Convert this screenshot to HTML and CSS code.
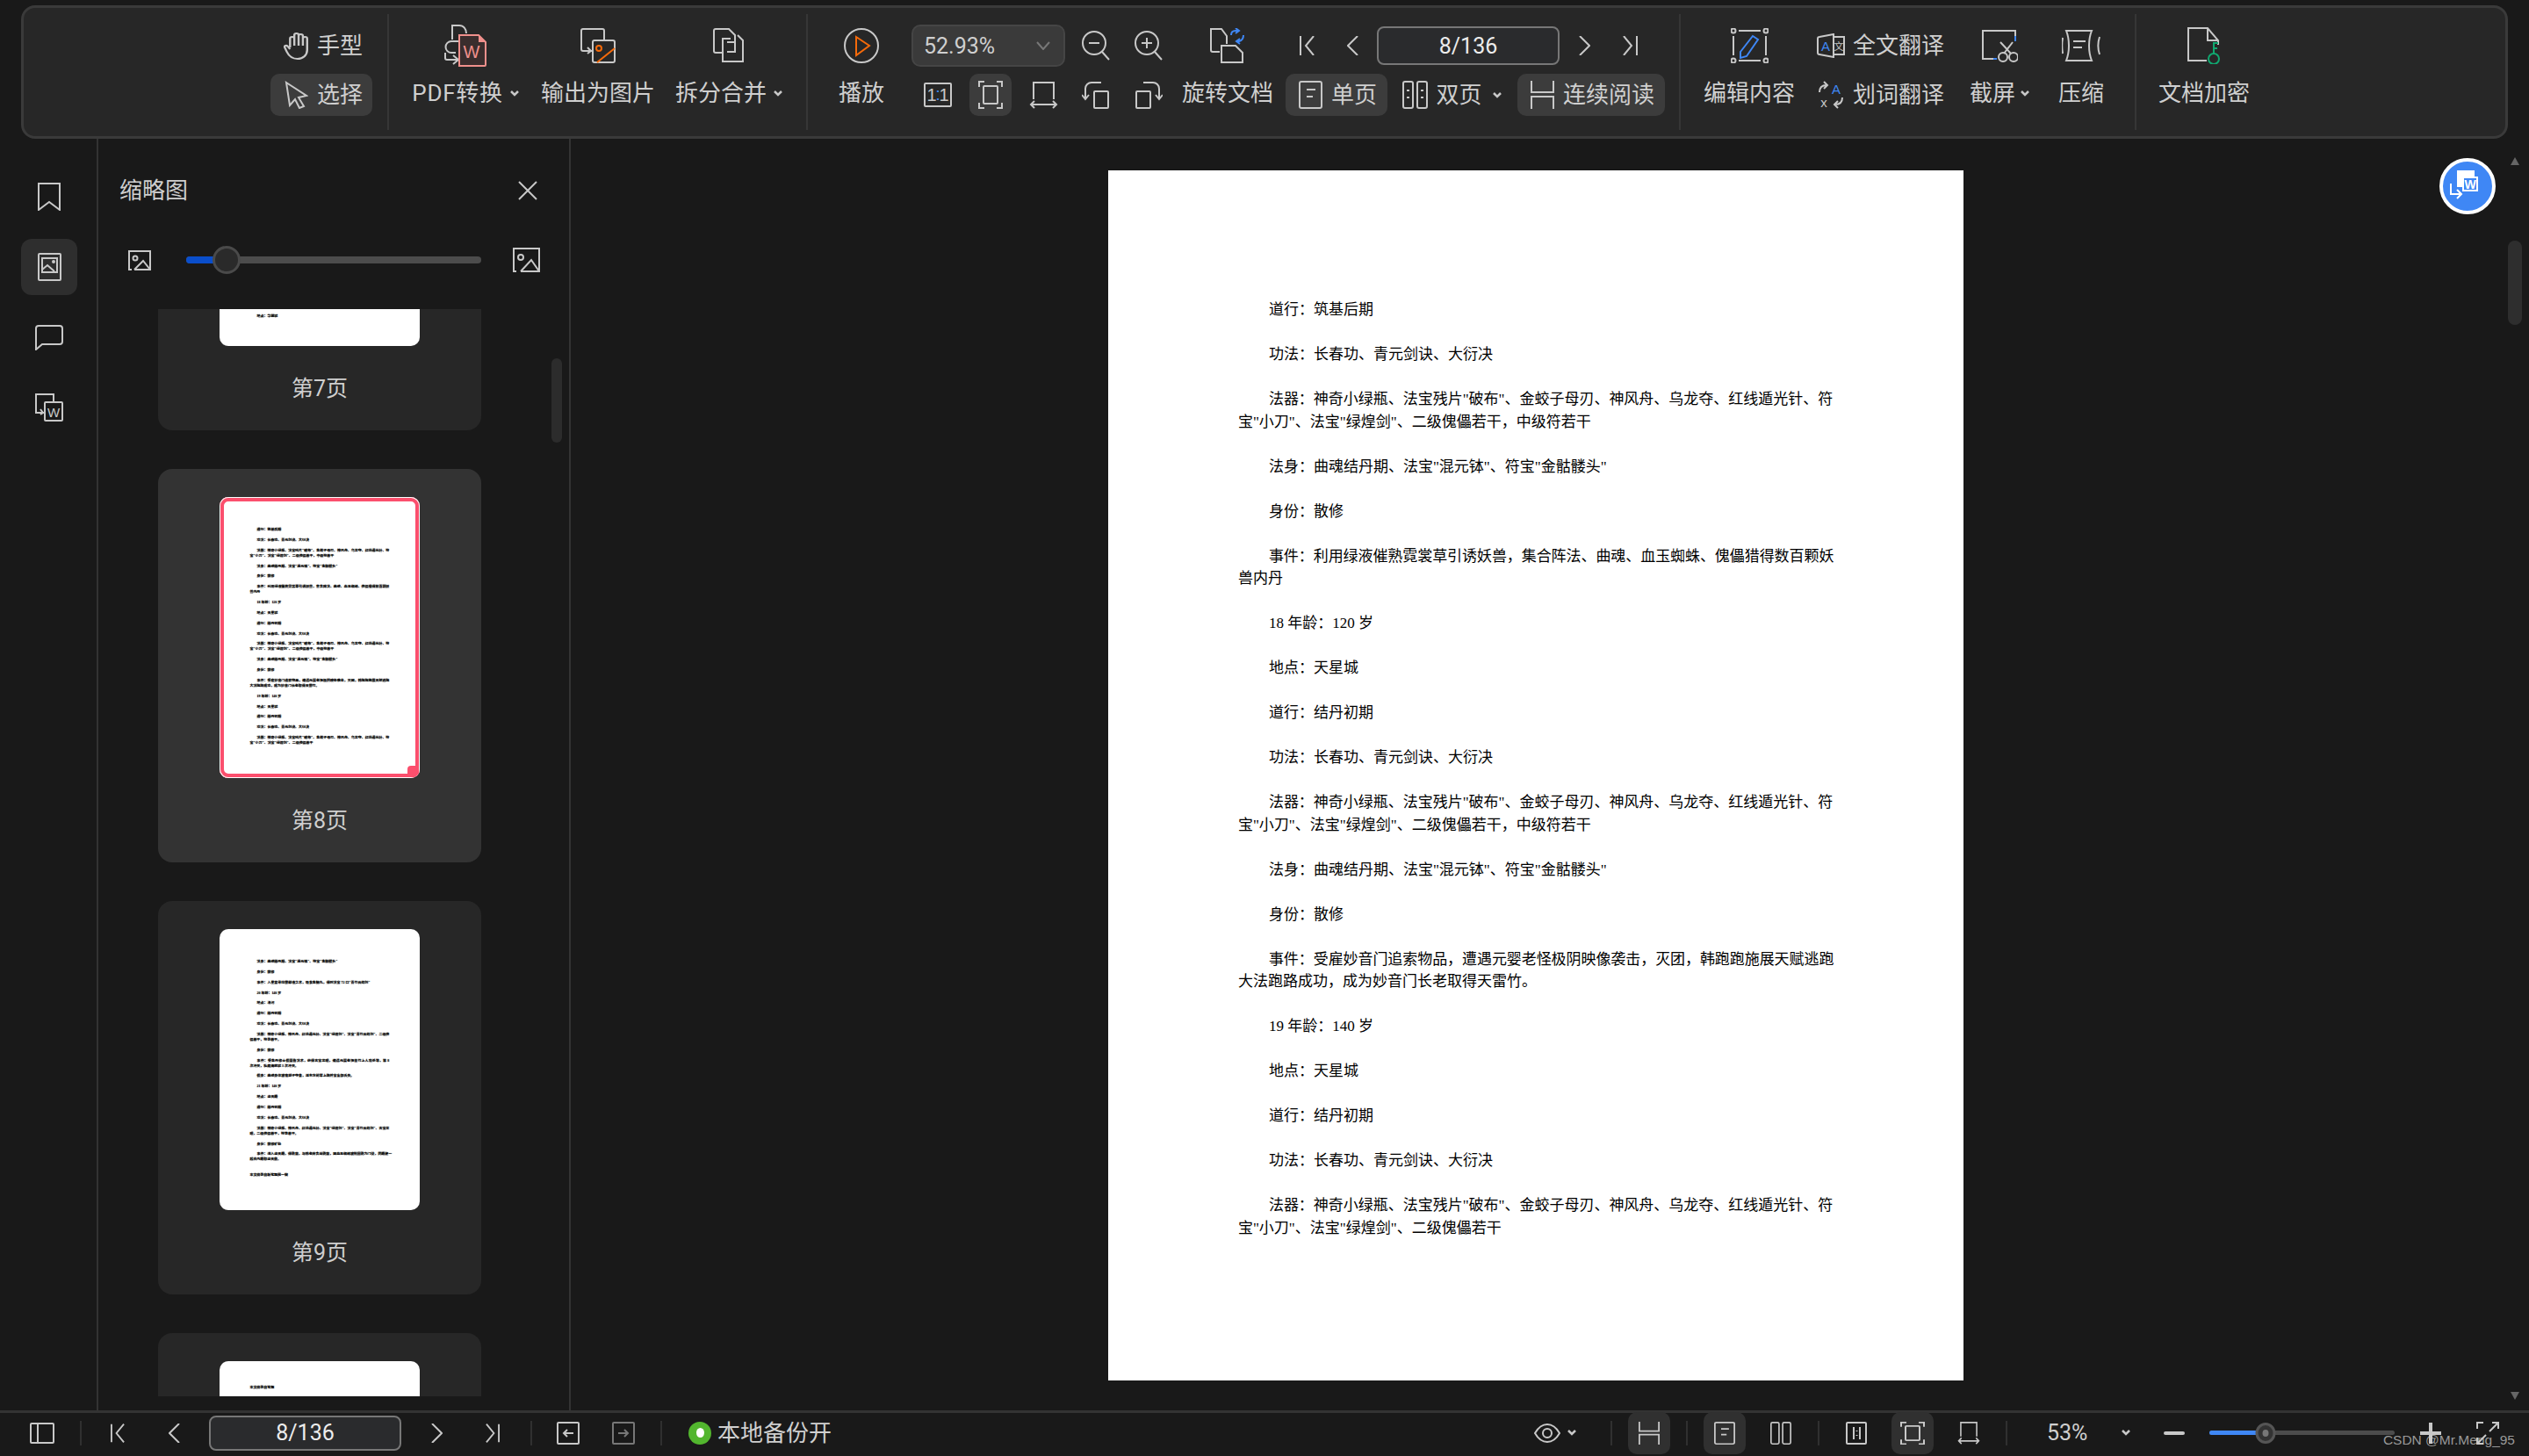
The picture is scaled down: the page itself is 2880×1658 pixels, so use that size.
FILE: index.html
```html
<!DOCTYPE html>
<html lang="zh-CN">
<head>
	<meta charset="UTF-8">
	<title>PDF阅读器</title>
	<link rel="stylesheet" href="styles.css">
</head>
<body>
<svg class="sprite" width="0" height="0">
	<defs>
		<g id="first"><path d="M1 0v22M16 0L7 11l9 11"/></g>
		<g id="prev"><path d="M12 0L1 11l11 11"/></g>
		<g id="next"><path d="M1 0l11 11L1 22"/></g>
		<g id="last"><path d="M16 0v22M1 0l9 11L1 22"/></g>
		<g id="single"><rect x="1" y="1" width="25" height="30" rx="2"/><path d="M9 10h10M9 18h7"/></g>
		<g id="double"><rect x="1" y="1" width="11" height="30" rx="2"/><rect x="17" y="1" width="11" height="30" rx="2"/><path d="M5 11h3M5 19h3M21 11h3M21 19h3"/></g>
		<g id="cont"><path d="M1 0v13h25V0M1 32V18h25v14"/></g>
		<g id="fit"><path d="M1 7V1h6M21 1h6v6M27 25v6h-6M7 31H1v-6"/><rect x="6" y="6" width="16" height="20" rx="1"/></g>
		<g id="fitw"><path d="M5 20V1h23v19M2 26h29M6 22l-4 4 4 4M27 22l4 4-4 4"/></g>
		<g id="chev"><path d="M1 1l4 4 4-4"/></g>
	</defs>
</svg>

<div class="app">
	<header class="top">
		<div class="toolbar">
			<section class="sec sec-mode">
				<div class="stack">
					<div class="row pill-row plain">
						<svg class="ic" width="28" height="32" viewBox="0 0 23 32" preserveAspectRatio="none"><path d="M6 18V8a2 2 0 0 1 4 0V4a2 2 0 0 1 4 0v1a2 2 0 0 1 4 0v3a2 2 0 0 1 4 0v13c0 6-4 10-9 10s-8-3-10-8l-2-5c-1-2 2-3 3-1l2 3M10 8v8M14 5v11M18 6v10"/></svg>
						<span>手型</span>
					</div>
					<div class="row pill-row on">
						<svg class="ic" width="28" height="32" viewBox="0 0 28 32"><path d="M3 2l23 15-9 2 6 10-5 2-5-10-6 7z"/></svg>
						<span>选择</span>
					</div>
				</div>
			</section>

			<section class="sec sec-convert">
				<div class="tool w-pdf">
					<div class="tool-icon">
						<svg class="ic" width="48" height="48" viewBox="0 0 48 48"><path d="M9 17V1h8c5 0 8 4 8 9M16 19H8a6 6 0 0 0 0 13h5M1 32v6a2 2 0 0 0 2 2h12M10 35l6 5-6 5"/><path class="pink" d="M17 12h22l8 8v26a1 1 0 0 1-1 1H17z"/><path class="pink-solid" d="M39 12l8 8h-8z"/><text class="pink-text" x="31" y="38" text-anchor="middle">W</text></svg>
					</div>
					<div class="tool-label">PDF转换<svg class="ic chev" width="10" height="7" viewBox="0 0 10 7"><use href="#chev"/></svg></div>
				</div>
				<div class="tool w5">
					<div class="tool-icon">
						<svg class="ic" width="40" height="40" viewBox="0 0 40 40"><path d="M14 26H3a2 2 0 0 1-2-2V3a2 2 0 0 1 2-2h22a2 2 0 0 1 2 2v11M1 20v4a2 2 0 0 0 2 2h9M8 22l4 4-4 3"/><rect x="14" y="14" width="25" height="25" rx="2"/><circle class="orange" cx="21" cy="23" r="3"/><path class="orange" d="M19 39l20-16"/></svg>
					</div>
					<div class="tool-label">输出为图片</div>
				</div>
				<div class="tool w-split">
					<div class="tool-icon">
						<svg class="ic" width="36" height="40" viewBox="0 0 36 40"><path d="M11 28H3a2 2 0 0 1-2-2V3a2 2 0 0 1 2-2h15l7 7v19h-9"/><path d="M20 12H11v26h23V14l-6-6M16 16h9"/></svg>
					</div>
					<div class="tool-label">拆分合并<svg class="ic chev" width="10" height="7" viewBox="0 0 10 7"><use href="#chev"/></svg></div>
				</div>
			</section>

			<section class="sec sec-view">
				<div class="tool w2">
					<div class="tool-icon">
						<svg class="ic" width="40" height="40" viewBox="0 0 40 40"><circle cx="20" cy="20" r="19"/><path class="orange" d="M14 10l15 10-15 11z"/></svg>
					</div>
					<div class="tool-label">播放</div>
				</div>
				<div class="stack zoom-group">
					<div class="row">
						<div class="zoom-select"><span>52.93%</span><svg class="ic dim" width="16" height="10" viewBox="0 0 16 10"><path d="M1 1l7 8 7-8"/></svg></div>
						<div class="cell first-zoom"><svg class="ic" width="32" height="34" viewBox="0 0 32 34"><circle cx="14" cy="14" r="13"/><path d="M23 24l8 9M8 14h12"/></svg></div>
						<div class="cell"><svg class="ic" width="32" height="34" viewBox="0 0 32 34"><circle cx="14" cy="14" r="13"/><path d="M23 24l8 9M8 14h12M14 8v12"/></svg></div>
					</div>
					<div class="row">
						<div class="cell">
							<svg class="ic" width="32" height="28" viewBox="0 0 32 28"><rect x="1" y="1" width="30" height="26" rx="1"/><text class="ratio" x="9" y="21" text-anchor="middle">1</text><text class="ratio blue-text" x="16" y="20" text-anchor="middle">:</text><text class="ratio" x="23" y="21" text-anchor="middle">1</text></svg>
						</div>
						<div class="cell"><span class="square on"><svg class="ic" width="28" height="32" viewBox="0 0 28 32"><use href="#fit"/></svg></span></div>
						<div class="cell"><svg class="ic" width="33" height="31" viewBox="0 0 33 31"><use href="#fitw"/></svg></div>
						<div class="cell"><svg class="ic" width="32" height="31" viewBox="0 0 32 31"><rect x="14" y="11" width="16" height="19" rx="1"/><path d="M22 1H11a7 7 0 0 0-7 7v12M0 15l4 5 4-5"/></svg></div>
						<div class="cell"><svg class="ic" width="32" height="31" viewBox="0 0 32 31"><rect x="2" y="11" width="16" height="19" rx="1"/><path d="M10 1h11a7 7 0 0 1 7 7v12M24 15l4 5 4-5"/></svg></div>
					</div>
				</div>
				<div class="tool w-rotate">
					<div class="tool-icon">
						<svg class="ic" width="40" height="40" viewBox="0 0 40 40"><path d="M11 27H3a2 2 0 0 1-2-2V1h12l6 8v9"/><path d="M13 20h16l8 8v11H13z"/><path class="blue" d="M24 8c0-3 2-5 5-5h3M29 0l4 3-4 3M38 8c0 4-1 6-5 7h-3M34 12l-4 3 4 3"/></svg>
					</div>
					<div class="tool-label">旋转文档</div>
				</div>
				<div class="stack nav-group">
					<div class="row nav-row">
						<div class="nav-cell"><svg class="ic" width="17" height="22" viewBox="0 0 17 22"><use href="#first"/></svg></div>
						<div class="nav-cell"><svg class="ic" width="13" height="22" viewBox="0 0 13 22"><use href="#prev"/></svg></div>
						<div class="page-input">8/136</div>
						<div class="nav-cell"><svg class="ic" width="13" height="22" viewBox="0 0 13 22"><use href="#next"/></svg></div>
						<div class="nav-cell"><svg class="ic" width="17" height="22" viewBox="0 0 17 22"><use href="#last"/></svg></div>
					</div>
					<div class="row layout-row">
						<div class="pill-row on"><svg class="ic" width="27" height="32" viewBox="0 0 27 32"><use href="#single"/></svg><span>单页</span></div>
						<div class="pill-row double-item"><svg class="ic" width="29" height="32" viewBox="0 0 29 32"><use href="#double"/></svg><span>双页</span><svg class="ic chev" width="10" height="7" viewBox="0 0 10 7"><use href="#chev"/></svg></div>
						<div class="pill-row on"><svg class="ic" width="27" height="32" viewBox="0 0 27 32"><use href="#cont"/></svg><span>连续阅读</span></div>
					</div>
				</div>
			</section>

			<section class="sec sec-edit">
				<div class="tool w4">
					<div class="tool-icon">
						<svg class="ic" width="43" height="40" viewBox="0 0 43 40"><circle cx="3" cy="3" r="2.5"/><circle cx="40" cy="3" r="2.5"/><circle cx="3" cy="37" r="2.5"/><circle cx="40" cy="37" r="2.5"/><path d="M9 3h25M9 37h25M3 9v22M40 9v22"/><path class="blue" d="M25 9l6 4-13 19-7 2v-7z"/></svg>
					</div>
					<div class="tool-label">编辑内容</div>
				</div>
				<div class="stack trans-group">
					<div class="row trans-row">
						<svg class="ic" width="32" height="28" viewBox="0 0 32 28"><path d="M19 1L3 4a2 2 0 0 0-2 2v16a2 2 0 0 0 2 2l16 3zM19 4h12v20H19"/><text class="mini blue-text" x="10" y="20" text-anchor="middle">A</text><text class="tiny" x="25" y="19" text-anchor="middle">文</text></svg>
						<span>全文翻译</span>
					</div>
					<div class="row trans-row">
						<svg class="ic" width="32" height="32" viewBox="0 0 32 32"><path d="M3 13c0-5 3-8 8-8M8 1l4 4-4 4M29 19c0 5-3 8-8 8M24 23l-4 4 4 4"/><text class="mini blue-text" x="22" y="15" text-anchor="middle">A</text><text class="mini" x="8" y="30" text-anchor="middle">x</text></svg>
						<span>划词翻译</span>
					</div>
				</div>
				<div class="tool w-shot">
					<div class="tool-icon">
						<svg class="ic" width="42" height="37" viewBox="0 0 42 37"><path d="M14 33H2V1h37v6"/><path class="blue" d="M39 7v6M14 33h4"/><circle cx="25" cy="31" r="5"/><circle cx="37" cy="31" r="5"/><path d="M22 14l12 13M36 14L26 27"/></svg>
					</div>
					<div class="tool-label">截屏<svg class="ic chev" width="10" height="7" viewBox="0 0 10 7"><use href="#chev"/></svg></div>
				</div>
				<div class="tool w2">
					<div class="tool-icon">
						<svg class="ic" width="44" height="36" viewBox="0 0 44 36"><path d="M5 1h29c-4 10-4 24 0 34H5c4-10 4-24 0-34zM13 13h14M13 20h10M1 9c-1 6-1 12 0 18M43 8c-2 6-2 14 0 20"/></svg>
					</div>
					<div class="tool-label">压缩</div>
				</div>
			</section>

			<section class="sec sec-lock">
				<div class="tool w4">
					<div class="tool-icon">
						<svg class="ic" width="38" height="42" viewBox="0 0 38 42"><path d="M22 38H1V1h22l12 14v5M23 1v14h12"/><circle class="green" cx="30" cy="36" r="6"/><path class="green" d="M30 30V18h5M30 24h4"/></svg>
					</div>
					<div class="tool-label">文档加密</div>
				</div>
			</section>
		</div>
	</header>

	<div class="main">
		<nav class="rail">
			<div class="rail-btn"><svg class="ic" width="26" height="32" viewBox="0 0 26 32"><path d="M1 1h24v30L13 22 1 31z"/></svg></div>
			<div class="rail-btn on"><svg class="ic" width="27" height="32" viewBox="0 0 27 32"><rect x="1" y="1" width="25" height="30" rx="1"/><rect x="5" y="6" width="17" height="16"/><path d="M5 19l6-5 8 7"/><circle cx="18" cy="10" r="1"/></svg></div>
			<div class="rail-btn"><svg class="ic" width="32" height="29" viewBox="0 0 32 29"><path d="M4 1h24a3 3 0 0 1 3 3v15a3 3 0 0 1-3 3H8l-7 6V4a3 3 0 0 1 3-3z"/></svg></div>
			<div class="rail-btn"><svg class="ic" width="32" height="32" viewBox="0 0 32 32"><path d="M10 22H1V1h20v8M1 17v4M6 18l3 4-3 2"/><rect x="11" y="10" width="20" height="21" rx="1"/><text class="mini" x="21" y="27" text-anchor="middle">W</text></svg></div>
		</nav>

		<aside class="panel">
			<div class="panel-head">
				<h2 class="panel-title">缩略图</h2>
				<svg class="ic" width="22" height="22" viewBox="0 0 22 22"><path d="M1 1l20 20M21 1L1 21"/></svg>
			</div>
			<div class="size-row">
				<svg class="ic" width="26" height="23" viewBox="0 0 26 23"><path d="M25 22V1H1v21h3"/><circle cx="8" cy="9" r="2.5"/><path d="M7 22l10-10 8 10h-18"/></svg>
				<div class="slider size-slider"><div class="slider-fill"></div><div class="knob"></div></div>
				<svg class="ic" width="31" height="28" viewBox="0 0 31 28"><path d="M30 27V1H1v26h3"/><circle cx="9" cy="11" r="3"/><path d="M9 27l12-13 9 13H9"/></svg>
			</div>
			<div class="thumbs">
				<div class="card card-7">
					<div class="thumb">
						<div class="doc doc-tail"><p>地点：华盟城</p></div>
					</div>
					<div class="card-label">第7页</div>
				</div>
				<div class="card current">
					<div class="thumb">
						<div class="doc">
							<p>道行：筑基后期</p>
							<p>功法：长春功、青元剑诀、大衍决</p>
							<p><span class="fill">法器：神奇小绿瓶、法宝残片"破布"、金蛟子母刃、神风舟、乌龙夺、红线遁光针、符</span><span class="rest">宝"小刀"、法宝"绿煌剑"、二级傀儡若干，中级符若干</span></p>
							<p>法身：曲魂结丹期、法宝"混元钵"、符宝"金骷髅头"</p>
							<p>身份：散修</p>
							<p><span class="fill">事件：利用绿液催熟霓裳草引诱妖兽，集合阵法、曲魂、血玉蜘蛛、傀儡猎得数百颗妖</span><span class="rest">兽内丹</span></p>
							<p>18 年龄：120 岁</p>
							<p>地点：天星城</p>
							<p>道行：结丹初期</p>
							<p>功法：长春功、青元剑诀、大衍决</p>
							<p><span class="fill">法器：神奇小绿瓶、法宝残片"破布"、金蛟子母刃、神风舟、乌龙夺、红线遁光针、符</span><span class="rest">宝"小刀"、法宝"绿煌剑"、二级傀儡若干，中级符若干</span></p>
							<p>法身：曲魂结丹期、法宝"混元钵"、符宝"金骷髅头"</p>
							<p>身份：散修</p>
							<p><span class="fill">事件：受雇妙音门追索物品，遭遇元婴老怪极阴映像袭击，灭团，韩跑跑施展天赋逃跑</span><span class="rest">大法跑路成功，成为妙音门长老取得天雷竹。</span></p>
							<p>19 年龄：140 岁</p>
							<p>地点：天星城</p>
							<p>道行：结丹初期</p>
							<p>功法：长春功、青元剑诀、大衍决</p>
							<p><span class="fill">法器：神奇小绿瓶、法宝残片"破布"、金蛟子母刃、神风舟、乌龙夺、红线遁光针、符</span><span class="rest">宝"小刀"、法宝"绿煌剑"、二级傀儡若干</span></p>
						</div>
						<div class="corner"></div>
					</div>
					<div class="card-label">第8页</div>
				</div>
				<div class="card">
					<div class="thumb">
						<div class="doc">
							<p>法身：曲魂结丹期、法宝"混元钵"、符宝"金骷髅头"</p>
							<p>身份：散修</p>
							<p>事件：入星宫寻找雷劫液之术，吸食金髓丸，得到法宝 72 口"青竹云峰剑"</p>
							<p>20 年龄：140 岁</p>
							<p>地点：洛河</p>
							<p>道行：结丹初期</p>
							<p>功法：长春功、青元剑诀、大衍决</p>
							<p><span class="fill">法器：神奇小绿瓶、神风舟、红线遁光针、法宝"绿煌剑"、法宝"青竹云峰剑"、二级傀</span><span class="rest">儡若干，符录若干。</span></p>
							<p>身份：散修</p>
							<p><span class="fill">事件：受金丹修士假面告法术，获得古宝龙眼，遭遇元婴老怪苦竹上人攻杀等，第 8</span><span class="rest">次冲关，私藏海底城 3 次冲关。</span></p>
							<p>假身：曲魂身体被蛮胡子夺舍，送东方前辈上路并宝全部丢失。</p>
							<p>21 年龄：140 岁</p>
							<p>地点：虚天殿</p>
							<p>道行：结丹初期</p>
							<p>功法：长春功、青元剑诀、大衍决</p>
							<p><span class="fill">法器：神奇小绿瓶、神风舟、红线遁光针、法宝"绿煌剑"、法宝"青竹云峰剑"、古宝龙</span><span class="rest">眼，二级傀儡若干，符箓若干。</span></p>
							<p>身份：散修矿脉</p>
							<p><span class="fill">事件：进入虚天殿，得乾蓝，与韩老魔合战乾蓝，因血玉蜘蛛被抢回乾为门徒，同殿建一</span><span class="rest">起去内殿取虚天鼎。</span></p>
							<p class="gap-end rest">本文摘录自新笔趣阁一键</p>
						</div>
					</div>
					<div class="card-label">第9页</div>
				</div>
				<div class="card">
					<div class="thumb">
						<div class="doc doc-head"><p class="rest">本文摘录自笔趣</p></div>
					</div>
				</div>
			</div>
			<div class="panel-scroll"></div>
		</aside>

		<div class="viewer">
			<article class="page">
				<div class="doc">
					<p>道行：筑基后期</p>
					<p>功法：长春功、青元剑诀、大衍决</p>
					<p><span class="fill">法器：神奇小绿瓶、法宝残片"破布"、金蛟子母刃、神风舟、乌龙夺、红线遁光针、符</span><span class="rest">宝"小刀"、法宝"绿煌剑"、二级傀儡若干，中级符若干</span></p>
					<p>法身：曲魂结丹期、法宝"混元钵"、符宝"金骷髅头"</p>
					<p>身份：散修</p>
					<p><span class="fill">事件：利用绿液催熟霓裳草引诱妖兽，集合阵法、曲魂、血玉蜘蛛、傀儡猎得数百颗妖</span><span class="rest">兽内丹</span></p>
					<p>18 年龄：120 岁</p>
					<p>地点：天星城</p>
					<p>道行：结丹初期</p>
					<p>功法：长春功、青元剑诀、大衍决</p>
					<p><span class="fill">法器：神奇小绿瓶、法宝残片"破布"、金蛟子母刃、神风舟、乌龙夺、红线遁光针、符</span><span class="rest">宝"小刀"、法宝"绿煌剑"、二级傀儡若干，中级符若干</span></p>
					<p>法身：曲魂结丹期、法宝"混元钵"、符宝"金骷髅头"</p>
					<p>身份：散修</p>
					<p><span class="fill">事件：受雇妙音门追索物品，遭遇元婴老怪极阴映像袭击，灭团，韩跑跑施展天赋逃跑</span><span class="rest">大法跑路成功，成为妙音门长老取得天雷竹。</span></p>
					<p>19 年龄：140 岁</p>
					<p>地点：天星城</p>
					<p>道行：结丹初期</p>
					<p>功法：长春功、青元剑诀、大衍决</p>
					<p><span class="fill">法器：神奇小绿瓶、法宝残片"破布"、金蛟子母刃、神风舟、乌龙夺、红线遁光针、符</span><span class="rest">宝"小刀"、法宝"绿煌剑"、二级傀儡若干</span></p>
				</div>
			</article>
			<div class="float-btn">
				<svg width="40" height="36" viewBox="0 0 40 36"><path class="fb-fill" d="M8 0h20v7H14v12H8z"/><rect class="fb-line" x="15" y="8" width="16" height="15"/><text class="fb-text" x="23" y="21" text-anchor="middle">W</text><path class="fb-line" d="M1 15v12h11M8 22l5 5-5 5"/></svg>
			</div>
			<div class="scroll-up"></div>
			<div class="scroll-thumb"></div>
			<div class="scroll-down"></div>
		</div>
	</div>

	<footer class="status">
		<div class="sb-left">
			<div class="sb-panel"><svg class="ic" width="28" height="24" viewBox="0 0 28 24"><rect x="1" y="1" width="26" height="22" rx="1"/><path d="M9 1v22"/></svg></div>
			<i class="sb-sep"></i>
			<div class="sb-nav">
				<div class="sb-cell"><svg class="ic" width="16" height="22" viewBox="0 0 17 22"><use href="#first"/></svg></div>
				<div class="sb-cell"><svg class="ic" width="13" height="22" viewBox="0 0 13 22"><use href="#prev"/></svg></div>
				<div class="page-input sb-input">8/136</div>
				<div class="sb-cell"><svg class="ic" width="13" height="22" viewBox="0 0 13 22"><use href="#next"/></svg></div>
				<div class="sb-cell"><svg class="ic" width="16" height="22" viewBox="0 0 17 22"><use href="#last"/></svg></div>
			</div>
			<i class="sb-sep"></i>
			<div class="sb-hist">
				<svg class="ic" width="26" height="26" viewBox="0 0 26 26"><rect x="1" y="1" width="24" height="24" rx="1"/><path d="M19 13H8M12 9l-4 4 4 4"/></svg>
				<svg class="ic faded" width="26" height="26" viewBox="0 0 26 26"><rect x="1" y="1" width="24" height="24" rx="1"/><path d="M7 13h11M14 9l4 4-4 4"/></svg>
			</div>
			<i class="sb-sep"></i>
			<div class="sb-backup"><span class="dot"></span><span>本地备份开</span></div>
		</div>
		<div class="sb-right">
			<div class="sb-eye">
				<svg class="ic" width="30" height="22" viewBox="0 0 30 22"><path d="M1 11C5 4 10 1 15 1s10 3 14 10c-4 7-9 10-14 10S5 18 1 11z"/><circle cx="15" cy="11" r="5"/></svg>
				<svg class="ic chev" width="10" height="7" viewBox="0 0 10 7"><use href="#chev"/></svg>
			</div>
			<i class="sb-sep mid"></i>
			<div class="sb-cell64"><span class="tall on"><svg class="ic" width="24" height="26" viewBox="0 0 27 32" preserveAspectRatio="none"><use href="#cont"/></svg></span></div>
			<i class="sb-sep mid"></i>
			<div class="sb-cell64"><span class="tall on"><svg class="ic" width="24" height="26" viewBox="0 0 27 32" preserveAspectRatio="none"><use href="#single"/></svg></span></div>
			<div class="sb-cell64"><svg class="ic" width="24" height="26" viewBox="0 0 29 32" preserveAspectRatio="none"><rect x="1" y="1" width="11" height="30" rx="2"/><rect x="17" y="1" width="11" height="30" rx="2"/></svg></div>
			<i class="sb-sep mid"></i>
			<div class="sb-cell64"><svg class="ic" width="24" height="26" viewBox="0 0 24 26"><rect x="1" y="1" width="22" height="24" rx="1"/><path d="M9 6v14M16 6v14M12.500 10v1M12.500 15v1"/></svg></div>
			<div class="sb-cell64"><span class="tall on"><svg class="ic" width="28" height="26" viewBox="0 0 28 32" preserveAspectRatio="none"><use href="#fit"/></svg></span></div>
			<div class="sb-cell64"><svg class="ic" width="26" height="26" viewBox="0 0 33 31" preserveAspectRatio="none"><use href="#fitw"/></svg></div>
			<i class="sb-sep mid"></i>
			<div class="sb-pct">53%</div>
			<svg class="ic chev sb-pct-chev" width="10" height="7" viewBox="0 0 10 7"><use href="#chev"/></svg>
			<div class="sb-minus"></div>
			<div class="slider zoom-slider"><div class="slider-fill"></div><div class="knob"></div></div>
			<div class="sb-plus"></div>
			<svg class="ic sb-full" width="26" height="26" viewBox="0 0 26 26"><path d="M1 8V1h7M18 1h7v7M25 1L15 11M1 25l10-10M1 18v7h7"/></svg>
		</div>
		<div class="watermark">CSDN @Mr.Meng_95</div>
	</footer>
</div>
</body>
</html>
```

FILE: styles.css
```css
*{margin: 0;padding: 0;box-sizing: border-box}
body{background: #191919;color: #cfcfcf;font: 26px/1 Roboto, "Noto Sans CJK SC", sans-serif;overflow: hidden}
.sprite{position: absolute}
.app{width: 2880px;height: 1658px;display: flex;flex-direction: column}

/* icons */
.ic{fill: none;stroke: #c8c8c8;stroke-width: 2;flex: none;display: block}
.ic .orange{stroke: #f56a0a}
.ic .blue{stroke: #3f87f5}
.ic .green{stroke: #10a870}
.ic .pink{stroke: #f0908c;fill: #3a2d2d}
.ic .pink-solid{stroke: none;fill: #f0908c}
.ic text{stroke: none;fill: #c8c8c8;font-family: "Liberation Sans", "Noto Sans CJK SC", sans-serif}
.ic .pink-text{fill: #f0908c;font-size: 20px}
.ic .mini{font-size: 15px}
.ic .ratio{font-size: 20px}
.ic .tiny{font-size: 11px}
.ic .blue-text{fill: #3f87f5}
.ic.dim{stroke: #777}
.ic.faded{stroke: #777}
.chev{stroke-width: 2.5;margin-left: 8px}

/* toolbar */
.top{height: 158px;padding: 6px 24px 0}
.toolbar{height: 152px;background: #272727;border: 3px solid #3a3a3a;border-radius: 16px;display: flex}
.sec{margin: 7px 0;padding-top: 12px;border-right: 2px solid #363636;display: flex;align-items: flex-start;flex: none}
.sec-mode{width: 416px;justify-content: flex-end;padding-right: 17px}
.sec-convert{width: 477px;padding-left: 24px;gap: 23px}
.sec-view{width: 994px;padding-left: 35px}
.sec-edit{width: 519px;padding-left: 26px}
.sec-lock{border-right: 0;padding-left: 25px}

.stack{display: flex;flex-direction: column;gap: 8px}
.row{height: 48px;display: flex;align-items: center}
.tool{display: flex;flex-direction: column;gap: 8px;flex: none}
.tool-icon,.tool-label{height: 48px;display: flex;align-items: center;justify-content: center;white-space: nowrap}
.tool-label{padding-bottom: 4px}
.w-pdf{width: 126px}
.w-pdf .tool-label{letter-spacing: .7px}
.w5{width: 130px}
.w4{width: 104px}
.w2{width: 52px}
.w-split{width: 122px}
.w-rotate{width: 104px;margin-left: 8px}
.w-shot{width: 74px;margin-left: 25px}
.w-shot .chev{margin-left: 6px}
.w-shot + .w2{margin-left: 30px}

.pill-row{height: 48px;display: flex;align-items: center;border-radius: 10px;padding: 0 13px 0 15px;gap: 10px;white-space: nowrap}
.on{background: #3c3c3c}
.sec-mode .stack{width: 116px}

.zoom-group{width: 300px;margin-left: 31px}
.zoom-select{width: 175px;height: 48px;flex: none;background: #3a3a3a;border: 2px solid #454545;border-radius: 10px;display: flex;align-items: center;justify-content: space-between;padding: 0 15px 0 12px;font-size: 25px}
.cell{width: 60px;height: 48px;flex: none;display: flex;align-items: center;justify-content: center}
.first-zoom{margin-left: 5px}
.square{width: 48px;height: 48px;border-radius: 10px;display: flex;align-items: center;justify-content: center}

.nav-group{width: 432px;margin-left: 14px}
.nav-row{gap: 4px}
.nav-cell{width: 48px;height: 44px;display: flex;align-items: center;justify-content: center}
.page-input{width: 208px;height: 44px;background: #2a2b2d;border: 2px solid #777;border-radius: 8px;color: #ececec;font-size: 25px;display: flex;align-items: center;justify-content: center}
.layout-row{justify-content: space-between}
.double-item{padding: 0;width: 115px}
.double-item .chev{margin-left: 2px}
.layout-row .pill-row:first-child{width: 116px}
.layout-row .pill-row:last-child{width: 168px}

.trans-group{width: 146px;margin-left: 25px}
.trans-row{gap: 9px;white-space: nowrap}

/* main */
.main{flex: 1;min-height: 0;display: flex}
.rail{width: 112px;flex: none;border-right: 2px solid #333;padding: 34px 0 0 24px;display: flex;flex-direction: column;gap: 16px}
.rail-btn{width: 64px;height: 64px;border-radius: 12px;display: flex;align-items: center;justify-content: center}
.rail-btn.on{background: #2e2e2e}

.panel{width: 538px;flex: none;position: relative;border-right: 2px solid #333;display: flex;flex-direction: column}
.panel-head{height: 48px;margin-top: 35px;padding: 0 36px 0 24px;display: flex;align-items: center;justify-content: space-between}
.panel-title{font-size: 26px;font-weight: 400}
.size-row{height: 32px;margin-top: 39px;padding-left: 34px;display: flex;align-items: center}
.slider{height: 8px;border-radius: 4px;background: #4c4c4c;position: relative}
.slider-fill{height: 100%;border-radius: 4px 0 0 4px;background: #0a4ecb}
.knob{position: absolute;top: 50%;border-radius: 50%;transform: translate(-50%, -50%);background: #2a2a2a;border: 3px solid #4a4a4a}
.size-slider{width: 336px;margin: 0 36px 0 40px}
.size-slider .slider-fill{width: 46px}
.size-slider .knob{left: 46px;width: 32px;height: 32px}

.thumbs{height: 1238px;margin-top: 40px;padding-left: 68px;overflow: hidden;display: flex;flex-direction: column;gap: 44px}
.card{width: 368px;height: 448px;flex: none;background: #272727;border-radius: 16px;padding-top: 32px;display: flex;flex-direction: column;align-items: center}
.card-7{margin-top: -310px}
.card.current{background: #333}
.thumb{width: 228px;height: 320px;flex: none;background: #fff;border-radius: 10px;overflow: hidden;position: relative}
.card-label{margin-top: 31px;height: 36px;line-height: 36px;font-size: 25px}
.current .thumb{box-shadow: inset 0 0 0 1px #fff, inset 0 0 0 5px #fb4f6d}
.corner{position: absolute;right: 1px;bottom: 1px;width: 13px;height: 13px;background: #fb4f6d;border-radius: 4px 0 4px 0}
.panel-scroll{position: absolute;left: 516px;top: 250px;width: 12px;height: 96px;border-radius: 6px;background: #2c2c2c}

/* page text, all in em so the thumbnails reuse it */
.doc{font: 17px/1.5 "Liberation Serif", "Noto Sans CJK SC", serif;color: #000;padding: 8.6em 8.76em 0 8.7em}
.doc p{text-indent: 2.06em;margin-bottom: 1.5em;white-space: nowrap}
.doc .fill{display: block;text-align: justify;text-align-last: justify;letter-spacing: -.004em}
.doc .rest{display: block;text-indent: 0}
.thumb .doc{font-size: 3.96px;font-weight: 700;text-shadow: 0 0 1px rgba(0, 0, 0, .6)}
.doc-tail{padding-top: 71.4em}
.doc-head{padding-top: 6.8em}
.gap-end{margin-top: 3em}

.viewer{flex: 1;min-width: 0;position: relative;padding: 36px 32px 0 0;display: flex;justify-content: center;align-items: flex-start}
.page{width: 974px;height: 1378px;background: #fff;flex: none}
.float-btn{position: absolute;left: 2128px;top: 22px;width: 64px;height: 64px;border-radius: 50%;background: #3f87f5;border: 4px solid #fff;display: flex;align-items: center;justify-content: center;margin-left: 0}
.fb-fill{fill: #fff}
.fb-line{fill: none;stroke: #fff;stroke-width: 2}
.fb-text{fill: #fff;font: 700 14px "Liberation Sans", sans-serif}
.scroll-up,.scroll-down{position: absolute;right: 11px;width: 0;height: 0;border-left: 5px solid transparent;border-right: 5px solid transparent}
.scroll-up{top: 21px;border-bottom: 9px solid #666}
.scroll-down{bottom: 12px;border-top: 9px solid #666}
.scroll-thumb{position: absolute;right: 8px;top: 116px;width: 16px;height: 96px;border-radius: 8px;background: #2e2e2e}

/* status bar */
.status{height: 52px;flex: none;border-top: 3px solid #333;padding-bottom: 4px;display: flex;align-items: center;justify-content: space-between;position: relative}
.sb-left,.sb-right,.sb-nav,.sb-hist,.sb-backup,.sb-eye{display: flex;align-items: center}
.sb-sep{width: 2px;height: 28px;background: #303030;flex: none}
.sb-panel{padding: 0 29px 0 34px}
.sb-nav{padding: 0 11px 0 9px}
.sb-cell{width: 64px;display: flex;justify-content: center}
.sb-input{width: 219px;height: 40px;margin: 0 8px}
.sb-hist{padding: 0 29px 0 28px;gap: 37px}
.sb-backup{padding-left: 30px;gap: 7px}
.dot{width: 26px;height: 26px;border-radius: 50%;background: #52b62e;display: flex;align-items: center;justify-content: center}
.dot::after{content: "";width: 9px;height: 11px;border-radius: 50%;background: #fff}

.sb-right{padding-right: 34px}
.sb-eye{margin-right: 29px}
.sb-sep.mid{margin: 0 10px}
.sb-cell64{width: 64px;height: 48px;display: flex;align-items: center;justify-content: center}
.tall{width: 48px;height: 48px;border-radius: 10px;display: flex;align-items: center;justify-content: center}
.tall.on{background: #303030}
.sb-pct{margin-left: 35px;font-size: 25px;width: 55px}
.sb-pct-chev{margin-left: 30px}
.sb-minus{width: 24px;height: 4px;border-radius: 2px;background: #c8c8c8;margin-left: 38px}
.zoom-slider{width: 211px;height: 5px;margin-left: 28px}
.zoom-slider .slider-fill{width: 53px;background: #3f87f5}
.zoom-slider .knob{left: 64px;width: 23px;height: 24px;background: #333;border-color: #555}
.zoom-slider .knob::after{content: "";position: absolute;left: 5px;top: 5px;width: 7px;height: 8px;border-radius: 50%;background: #777}
.sb-plus{width: 24px;height: 24px;margin-left: 29px;background: linear-gradient(#c8c8c8, #c8c8c8) center / 24px 4px no-repeat, linear-gradient(#c8c8c8, #c8c8c8) center / 4px 24px no-repeat}
.sb-full{margin-left: 40px}
.watermark{position: absolute;right: 16px;top: 22px;font: 15.5px "Liberation Sans", sans-serif;color: rgba(210, 210, 210, .7)}
```
